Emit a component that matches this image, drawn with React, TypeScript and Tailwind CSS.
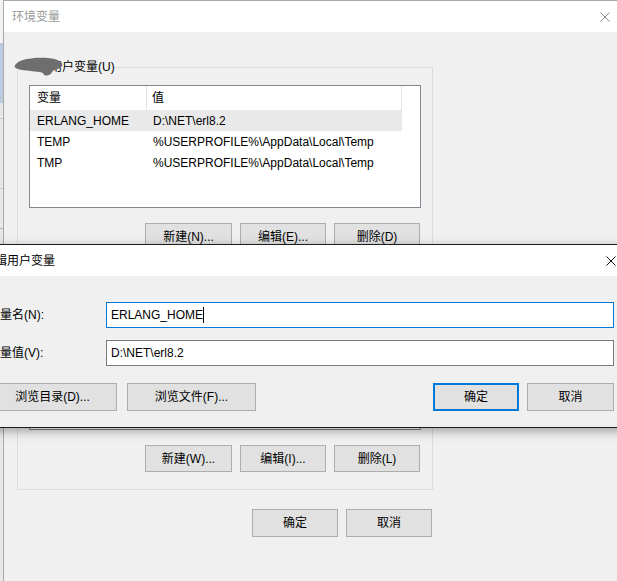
import React from "react";

const FONT = "font-['Liberation_Sans','Noto_Sans_CJK_SC',sans-serif]";

const userRows = [
  { name: "ERLANG_HOME", value: "D:\\NET\\erl8.2", selected: true },
  { name: "TEMP", value: "%USERPROFILE%\\AppData\\Local\\Temp" },
  { name: "TMP", value: "%USERPROFILE%\\AppData\\Local\\Temp" },
];

function Btn({ label, width, primary }: { label: string; width: string; primary?: boolean }) {
  return (
    <div
      className={`flex h-full shrink-0 items-center justify-center bg-[#e1e1e1] text-[12px] text-black ${width} ${
        primary ? "border-2 border-[#0078d7]" : "border border-[#adadad]"
      }`}
    >
      {label}
    </div>
  );
}

function CloseIcon({ color }: { color: string }) {
  return (
    <svg width="10" height="10" viewBox="0 0 10 10">
      <path d="M0.5 0.5 L9.5 9.5 M9.5 0.5 L0.5 9.5" stroke={color} strokeWidth="1" />
    </svg>
  );
}

function ListView({ height, rows }: { height: string; rows: typeof userRows }) {
  return (
    <div className={`ml-[11px] w-[392px] border border-[#828790] bg-white ${height}`}>
      <div className="flex h-[24px] text-[12px]">
        <div className="flex w-[117px] items-center border-r border-[#e5e5e5] pl-[7px]">变量</div>
        <div className="flex w-[255px] items-center border-r border-[#e5e5e5] pl-[5px]">值</div>
      </div>
      {rows.map((r) => (
        <div
          key={r.name}
          className={`flex h-[21px] w-[372px] items-center text-[12px] ${r.selected ? "bg-[#e9e9e9]" : ""}`}
        >
          <div className="w-[117px] pl-[7px]">{r.name}</div>
          <div className="pl-[6px]">{r.value}</div>
        </div>
      ))}
    </div>
  );
}

export default function App() {
  return (
    <div className={`relative flex h-[581px] w-[617px] overflow-hidden bg-[#f0f0f0] text-black ${FONT}`}>
      {/* ── window behind, left edge ── */}
      <div className="flex w-[3px] shrink-0 flex-col bg-[#e8e8e8]">
        <div className="h-[43px] bg-[#f2f2f2]" />
        <div className="h-[60px] bg-[#bccbe0]" />
        <div className="h-[16px] border-b border-[#c8c8c8]" />
        <div className="h-[70px] border-b border-[#c8c8c8]" />
        <div className="h-[40px] border-b border-[#b0b0b0]" />
        <div className="flex-1" />
      </div>

      {/* ── 环境变量 ── */}
      <div className="flex h-[600px] w-[625px] shrink-0 flex-col border-l border-t border-[#a9a9a9] bg-[#f0f0f0]">
        <div className="flex h-[31px] shrink-0 items-center justify-between bg-white pl-[8px]">
          <span className="text-[12px] text-[#9a9a9a]">环境变量</span>
          <div className="flex h-full w-[46px] items-center justify-center">
            <CloseIcon color="#8a8a8a" />
          </div>
        </div>

        <div className="pl-[13px] pt-[27px]">
          <fieldset className="w-[416px] border border-[#dcdcdc] px-0 pb-[10px]">
            <legend className="relative ml-[20px] text-[12px] leading-[16px]">
              的用户变量(U)
              <svg className="absolute left-[-24px] top-[-3px]" width="50" height="22" viewBox="0 0 50 22">
                <path
                  d="M2 8 C6 3 20 1 34 2 C44 3 50 6 48 10 C47 13 40 13 38 16 C37 20 30 21 29 17 C24 15 10 15 4 13 C0 12 0 10 2 8 Z"
                  fill="#6e6e6e"
                />
              </svg>
            </legend>
            <div className="mt-[10px]">
              <ListView height="h-[123px]" rows={userRows} />
            </div>
            <div className="ml-[127px] mt-[15px] flex h-[27px] gap-[8px]">
              <Btn label="新建(N)..." width="w-[87px]" />
              <Btn label="编辑(E)..." width="w-[86px]" />
              <Btn label="删除(D)" width="w-[86px]" />
            </div>
          </fieldset>

          <fieldset className="mt-[7px] w-[416px] border border-[#dcdcdc] px-0 pb-[17px]">
            <legend className="ml-[10px] text-[12px] leading-[16px]">系统变量(S)</legend>
            <div className="mt-[10px]">
              <ListView height="h-[136px]" rows={[]} />
            </div>
            <div className="ml-[127px] mt-[15px] flex h-[27px] gap-[8px]">
              <Btn label="新建(W)..." width="w-[87px]" />
              <Btn label="编辑(I)..." width="w-[86px]" />
              <Btn label="删除(L)" width="w-[86px]" />
            </div>
          </fieldset>

          <div className="ml-[235px] mt-[19px] flex h-[28px] gap-[8px]">
            <Btn label="确定" width="w-[86px]" />
            <Btn label="取消" width="w-[86px]" />
          </div>
        </div>
      </div>

      {/* ── 编辑用户变量 (active window on top) ── */}
      <div className="absolute left-[-29px] top-[244px] w-[663px] border-y border-[#1c1c1c] shadow-[0_3px_10px_rgba(0,0,0,0.35)]">
        <div className="flex h-[31px] items-center justify-between bg-white pl-[12px]">
          <span className="text-[12px]">编辑用户变量</span>
          <div className="flex h-full w-[46px] items-center justify-center">
            <CloseIcon color="#111111" />
          </div>
        </div>
        <div className="bg-[#f0f0f0] pb-[16px] pl-[17px] pr-[20px] pt-[26px] text-[12px]">
          <div className="flex h-[26px] items-center">
            <div className="w-[118px]">变量名(N):</div>
            <div className="flex h-full flex-1 items-center border border-[#0078d7] bg-white pl-[4px]">
              ERLANG_HOME
              <span className="h-[16px] w-[1px] bg-black" />
            </div>
          </div>
          <div className="mt-[12px] flex h-[26px] items-center">
            <div className="w-[118px]">变量值(V):</div>
            <div className="flex h-full flex-1 items-center border border-[#7a7a7a] bg-white pl-[4px]">
              D:\NET\erl8.2
            </div>
          </div>
          <div className="mt-[17px] flex h-[28px]">
            <Btn label="浏览目录(D)..." width="w-[129px]" />
            <div className="ml-[10px] flex h-full">
              <Btn label="浏览文件(F)..." width="w-[129px]" />
            </div>
            <div className="flex-1" />
            <Btn label="确定" width="w-[86px]" primary />
            <div className="ml-[8px] flex h-full">
              <Btn label="取消" width="w-[87px]" />
            </div>
          </div>
        </div>
      </div>
    </div>
  );
}
